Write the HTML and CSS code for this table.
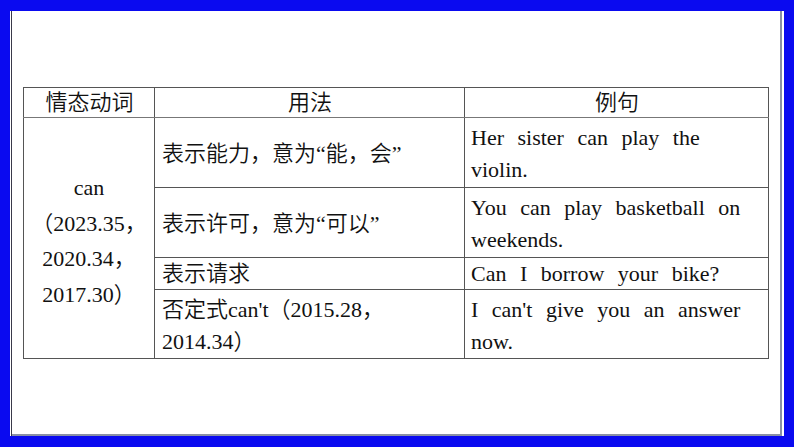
FILE: index.html
```html
<!DOCTYPE html>
<html lang="zh">
<head>
<meta charset="utf-8">
<link rel="stylesheet" href="styles.css">
</head>
<body>
<div class="frame">
  <div class="panel">
    <table class="grid">
      <colgroup>
        <col class="c1"><col class="c2"><col class="c3">
      </colgroup>
      <tr class="head">
        <th>情态动词</th>
        <th>用法</th>
        <th>例句</th>
      </tr>
      <tr class="r1">
        <td class="verb" rowspan="4">can<br>（2023.35，<br>2020.34，<br>2017.30）</td>
        <td class="use">表示能力，意为“能，会”</td>
        <td class="ex">Her sister can play the violin.</td>
      </tr>
      <tr class="r2">
        <td class="use">表示许可，意为“可以”</td>
        <td class="ex">You can play basketball on weekends.</td>
      </tr>
      <tr class="r3">
        <td class="use">表示请求</td>
        <td class="ex">Can I borrow your bike?</td>
      </tr>
      <tr class="r4">
        <td class="use">否定式can't（2015.28，2014.34）</td>
        <td class="ex">I can't give you an answer now.</td>
      </tr>
    </table>
  </div>
</div>
</body>
</html>
```

FILE: styles.css
```css
html, body {
  margin: 0;
  padding: 0;
}
body {
  width: 794px;
  height: 447px;
  background: #0a0af0;
  overflow: hidden;
  font-family: "Liberation Serif", "Noto Sans CJK SC", serif;
  color: #111;
}
.frame {
  padding: 11px 10px 11px 10px;
}
.panel {
  height: 425px;
  background: #fff;
  box-shadow: inset 1px 0 0 #fff, inset 2px 0 0 #3a3a4a,
              inset -2px 0 0 #fff, inset -4px 0 0 #8a90a4,
              inset 0 -2px 0 #8a90a4;
  padding: 76px 0 0 13px;
  box-sizing: border-box;
}
.grid {
  border-collapse: collapse;
  width: 745px;
  table-layout: fixed;
  font-size: 22px;
  font-weight: 350;
  border: 1px solid #222;
}
.c1 { width: 131px; }
.c2 { width: 310px; }
.c3 { width: 304px; }
.grid th, .grid td {
  border: 1px solid #555;
  padding: 3px 6px 0 7px;
  vertical-align: middle;
  line-height: 32px;
}
.grid th {
  font-weight: 350;
  text-align: center;
  line-height: 27px;
  padding-top: 0;
  border-bottom: 1px solid #777;
}
.head { height: 30px; }
.r1 { height: 70px; }
.r2 { height: 70px; }
.r3 { height: 32px; }
.r4 { height: 69px; }
.r3 td { line-height: 29px; padding-top: 0; }
.grid td.verb {
  text-align: center;
  line-height: 35.5px;
  padding: 6px 0 0 0;
}
.grid td.ex {
  word-spacing: 8px;
  padding-left: 6px;
  padding-right: 6px;
}
```
